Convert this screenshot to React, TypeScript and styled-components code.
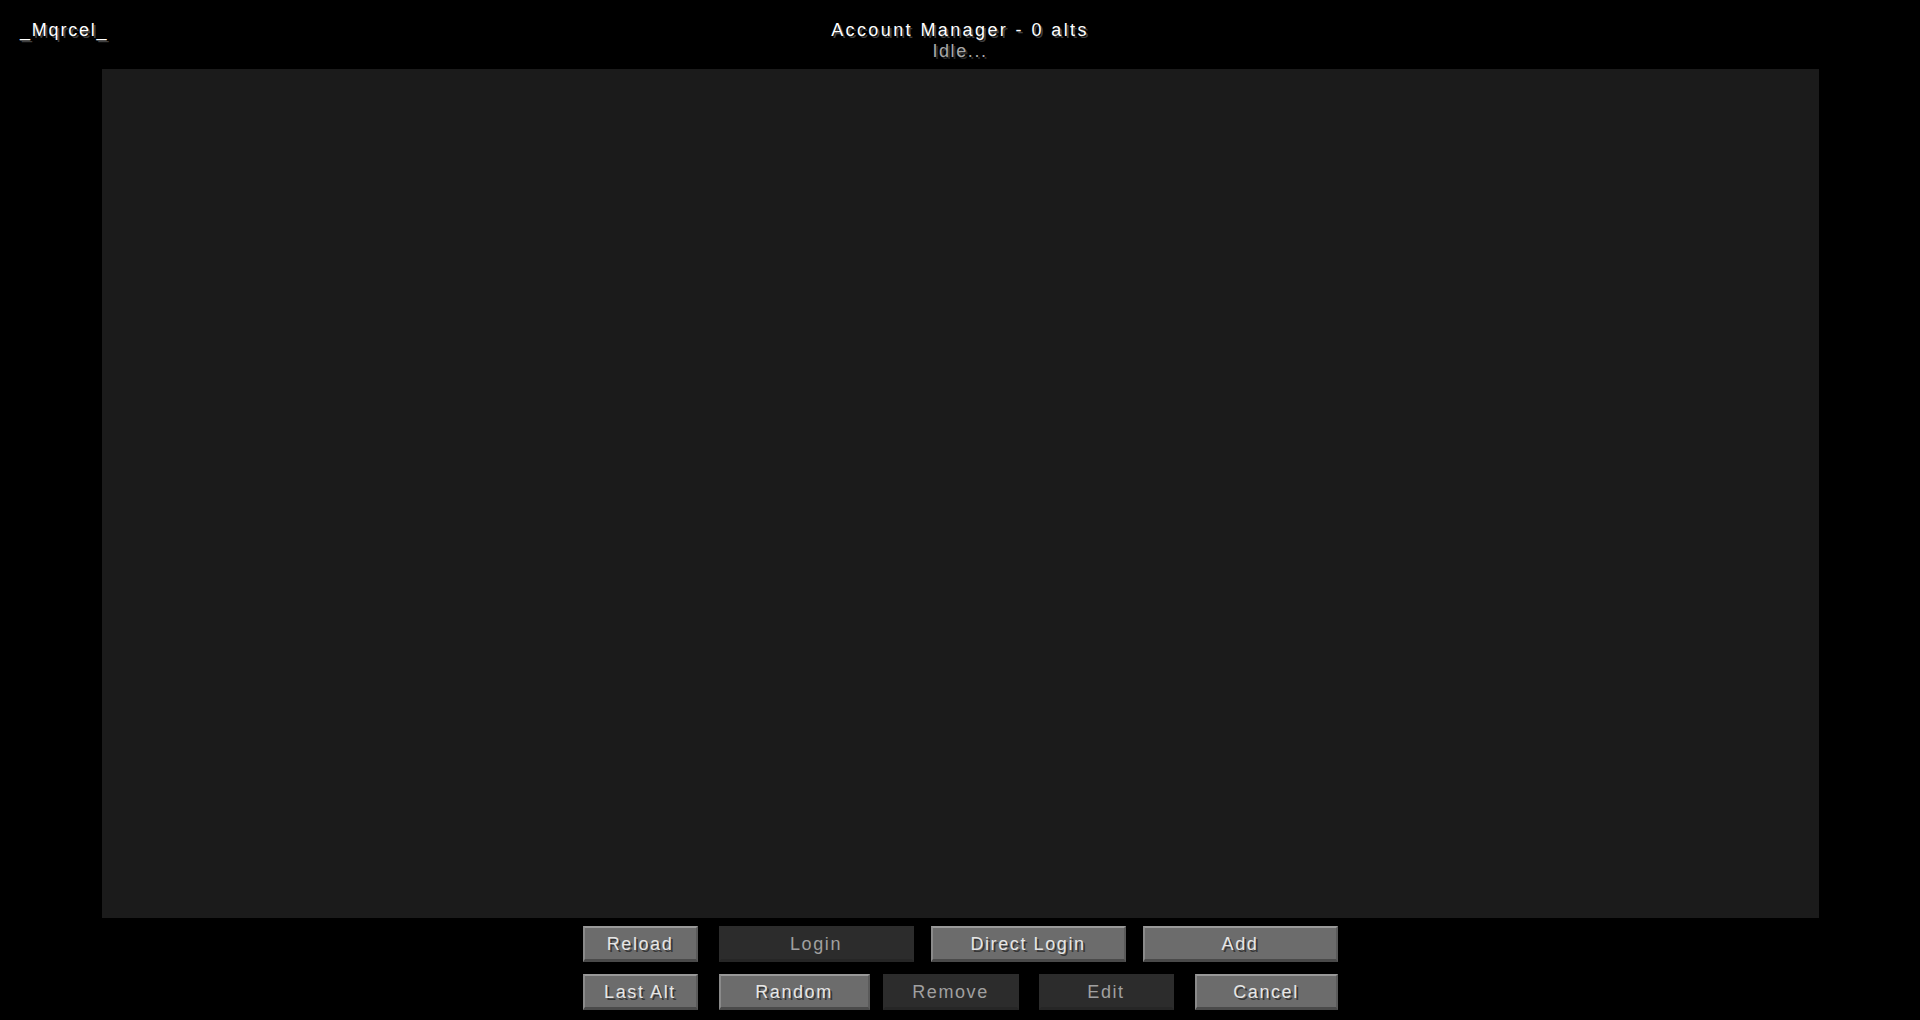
import React from "react";
import styled, {createGlobalStyle} from "styled-components";

const GlobalStyle = createGlobalStyle`
    html, body{
        margin: 0;
        padding: 0;
        background: #000;
    }
    #root{
        height: 1020px;
    }
`;

const Screen = styled.div`
    width: 1920px;
    height: 1020px;
    background: #000;
    display: flex;
    flex-direction: column;
    align-items: center;
    font-family: "Liberation Sans", Arial, sans-serif;
    font-size: 18px;
    letter-spacing: 2px;
    color: #fff;
    overflow: hidden;
`;

const Header = styled.div`
    width: 100%;
    height: 69px;
    display: grid;
    grid-template-columns: 1fr auto 1fr;
    box-sizing: border-box;
    padding: 20px 20px 0;
`;

const Username = styled.div`
    line-height: 20px;
    letter-spacing: 1.8px;
    text-shadow: 2px 2px 0 #3f3f3f;
`;

const TitleBlock = styled.div`
    display: flex;
    flex-direction: column;
    align-items: center;
    line-height: 20px;
    h1{
        font-size: 18px;
        font-weight: normal;
        letter-spacing: 2.4px;
        margin: 0;
        text-shadow: 2px 2px 0 #3f3f3f;
    }
    span{
        color: #a8a8a8;
        margin-top: 1px;
        letter-spacing: 1.6px;
        text-shadow: 2px 2px 0 #2a2a2a;
    }
`;

const AltList = styled.div`
    width: 1717px;
    height: 849px;
    background: #1b1b1b;
    flex-shrink: 0;
`;

const Row = styled.div<{$top: number}>`
    display: flex;
    width: 755px;
    margin-top: ${props => props.$top}px;
`;

const McButton = styled.button<{$w: number; $ml?: number}>`
    width: ${props => props.$w}px;
    height: 36px;
    margin-left: ${props => props.$ml || 0}px;
    padding: 0;
    box-sizing: border-box;
    font-family: inherit;
    font-size: 18px;
    letter-spacing: 1.6px;
    line-height: 1;
    color: #e6e6e6;
    text-shadow: 2px 2px 0 #383838;
    background: #6c6c6c;
    border: none;
    border-top: 2px solid #999;
    border-left: 2px solid #8a8a8a;
    border-right: 2px solid #5a5a5a;
    border-bottom: 3px solid #4a4a4a;
    box-shadow: 0 0 0 1px #000;
    &:disabled{
        background: #2c2c2c;
        color: #a0a0a0;
        text-shadow: none;
        border-color: #2c2c2c;
        border-bottom-color: #262626;
    }
`;

const topButtons = [
    {label: "Reload", w: 115, ml: 0},
    {label: "Login", w: 195, ml: 21, disabled: true},
    {label: "Direct Login", w: 195, ml: 17},
    {label: "Add", w: 195, ml: 17},
];

const bottomButtons = [
    {label: "Last Alt", w: 115, ml: 0},
    {label: "Random", w: 151, ml: 21},
    {label: "Remove", w: 136, ml: 13, disabled: true},
    {label: "Edit", w: 135, ml: 20, disabled: true},
    {label: "Cancel", w: 143, ml: 21},
];

const App = (): JSX.Element => {
    return (
        <>
            <GlobalStyle/>
            <Screen>
                <Header>
                    <Username>_Mqrcel_</Username>
                    <TitleBlock>
                        <h1>Account Manager - 0 alts</h1>
                        <span>Idle...</span>
                    </TitleBlock>
                    <div/>
                </Header>
                <AltList/>
                <Row $top={8}>
                    {topButtons.map(b => (
                        <McButton key={b.label} $w={b.w} $ml={b.ml} disabled={b.disabled}>{b.label}</McButton>
                    ))}
                </Row>
                <Row $top={12}>
                    {bottomButtons.map(b => (
                        <McButton key={b.label} $w={b.w} $ml={b.ml} disabled={b.disabled}>{b.label}</McButton>
                    ))}
                </Row>
            </Screen>
        </>
    );
}

export default App
